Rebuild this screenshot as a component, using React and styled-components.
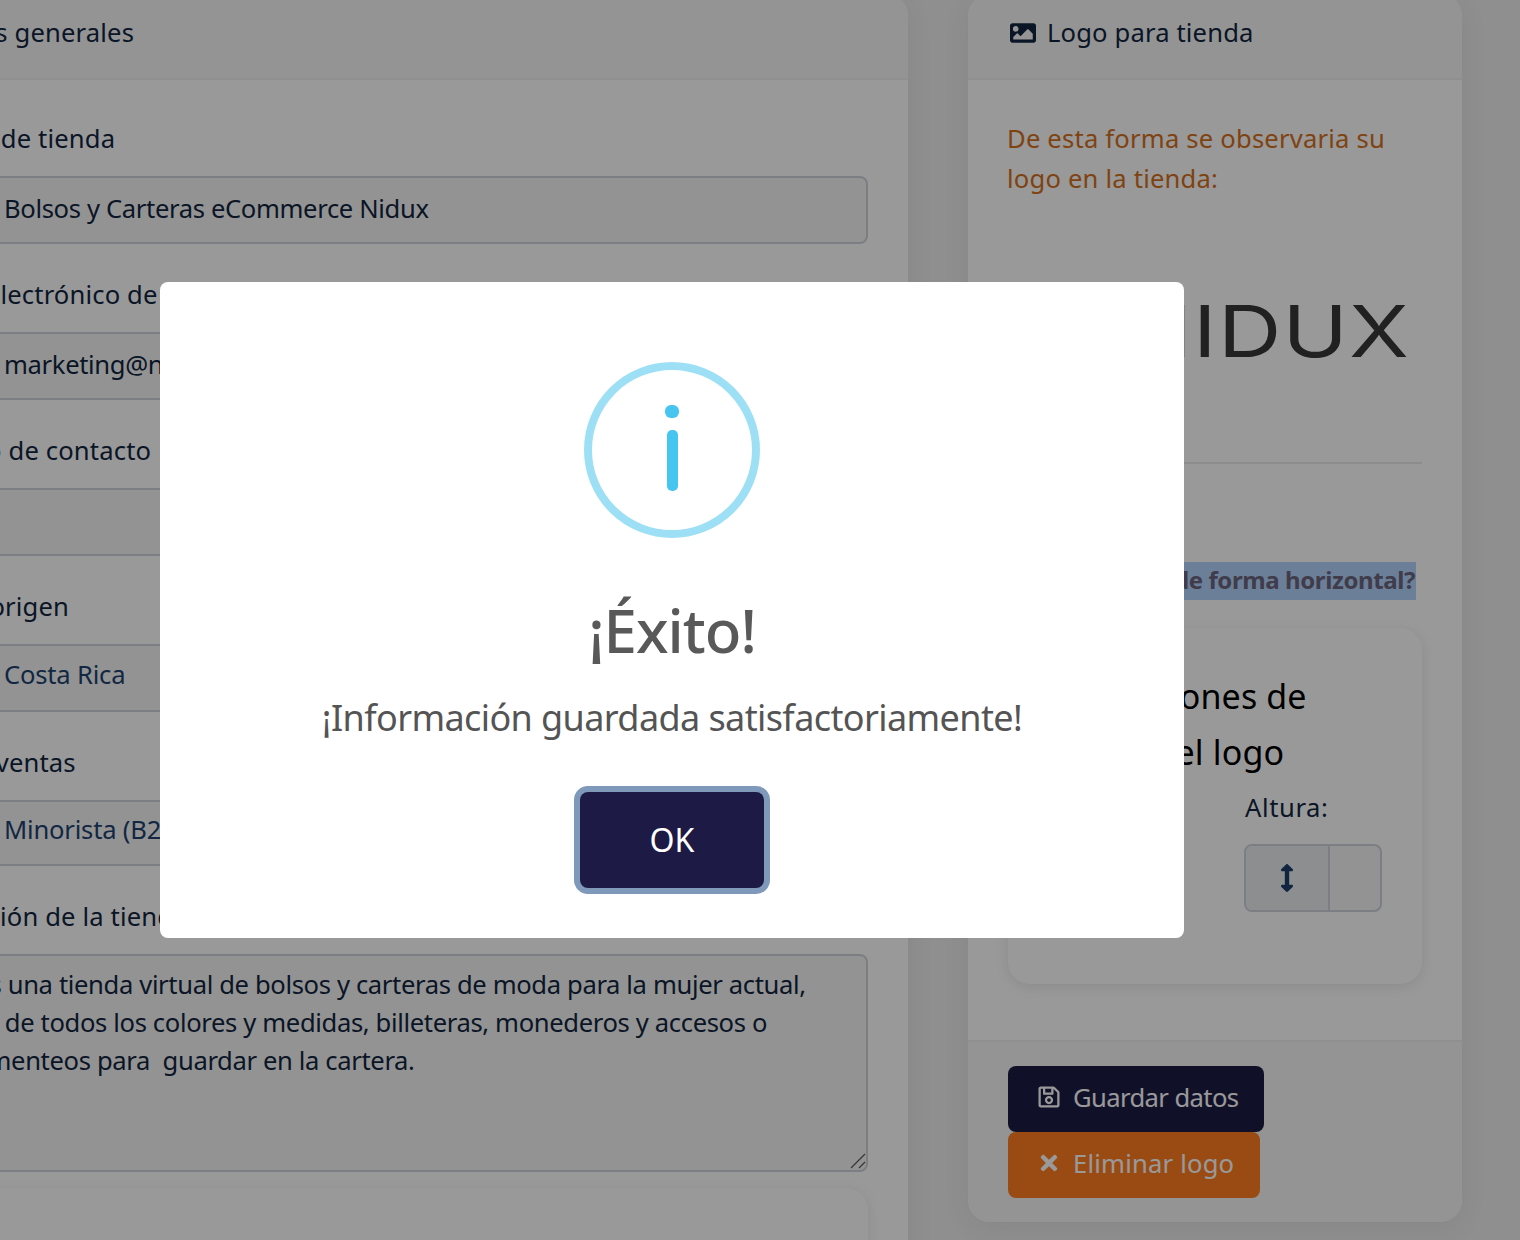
import React from 'react';
import styled, { createGlobalStyle } from 'styled-components';
import { FaImage, FaRegSave, FaTimes, FaArrowsAltV, FaStore, FaEnvelope, FaPhone, FaArrowsAltH } from 'react-icons/fa';

const Global = createGlobalStyle`
  * { box-sizing: border-box; }
  html, body { margin: 0; padding: 0; height: 100%; overflow: hidden; }
  body { background: #eeeeee; font-family: "Noto Sans", sans-serif; font-size: 25.6px; letter-spacing: 0.15px; color: #12263f; }
`;

const Viewport = styled.div`
  position: relative;
  width: 1520px;
  height: 1240px;
  overflow: hidden;
`;

// the page is scrolled sideways in the picture, so the left card starts off screen
const Page = styled.div`
  display: flex;
  align-items: flex-start;
  gap: 60px;
  width: 1650px;
  margin-left: -130px;
  margin-top: -6px;
`;

const Card = styled.section`
  width: ${p => p.$width}px;
  flex: none;
  background: #fff;
  border-radius: 22px;
  box-shadow: 0 6px 30px rgba(0, 0, 0, 0.06);
  overflow: hidden;
`;

const CardHeader = styled.header`
  display: flex;
  align-items: center;
  gap: 11px;
  height: 86px;
  padding: 0 42px 6px ${p => p.$left || 42}px;
  background: #f7f7f7;
  border-bottom: 2px solid #f0f0f0;
  line-height: 40px;
  color: #12263f;
`;

const CardBody = styled.div`
  padding: 40px 40px ${p => p.$bottom || 40}px;
`;

const CardFooter = styled.footer`
  display: flex;
  flex-direction: column;
  align-items: flex-start;
  padding: 24px 40px 24px;
  background: #f7f7f7;
  border-top: 2px solid #f0f0f0;
`;

const Field = styled.div`
  margin-bottom: ${p => p.$bottom ?? 32}px;
`;

const Label = styled.label`
  display: block;
  margin-bottom: 18px;
  margin-left: ${p => p.$shift || 0}px;
  line-height: 38px;
  height: 38px;
  white-space: nowrap;
`;

const Group = styled.div`
  display: flex;
  height: ${p => p.$height || 68}px;
  border: 2px solid #ced4da;
  border-radius: 8px;
  background: #f6f6f6;
  overflow: hidden;
`;

const Addon = styled.span`
  display: flex;
  align-items: center;
  justify-content: center;
  flex: none;
  width: ${p => p.$width}px;
  background: #ebedef;
  border-right: 2px solid #ced4da;
  color: #1d3d6b;
`;

const Input = styled.input`
  flex: 1;
  min-width: 0;
  padding: 0 18px 4px;
  border: 0;
  outline: 0;
  background: transparent;
  font: inherit;
  letter-spacing: -0.35px;
  color: #12263f;
`;

const Select = styled.select`
  flex: 1;
  min-width: 0;
  padding: 0 18px 7px;
  border: 0;
  outline: 0;
  background: transparent;
  appearance: none;
  font: inherit;
  letter-spacing: -0.2px;
  color: #1d4270;
`;

const TextareaWrap = styled.div`
  position: relative;
`;

const Textarea = styled.textarea`
  display: block;
  width: 100%;
  height: 218px;
  padding: 10px 20px 10px 10px;
  border: 2px solid #ced4da;
  border-radius: 8px;
  outline: 0;
  background: #f6f6f6;
  font: inherit;
  letter-spacing: -0.36px;
  line-height: 38px;
  color: #12263f;
  white-space: pre;
  overflow: hidden;
  resize: none;
`;

const Grip = styled.svg`
  position: absolute;
  right: 2px;
  bottom: 3px;
  width: 16px;
  height: 16px;
`;

const SubCard = styled.div`
  margin-top: ${p => p.$top || 0}px;
  min-height: ${p => p.$minHeight || 0}px;
  padding: 40px 40px 72px;
  background: #fff;
  border-radius: 22px;
  box-shadow: 0 3px 14px rgba(0, 0, 0, 0.09);
`;

const Notice = styled.p`
  margin: -1px 0 0 -1px;
  line-height: 40px;
  letter-spacing: 0.2px;
  color: #d4701e;
`;

const LogoBox = styled.div`
  display: flex;
  align-items: center;
  justify-content: flex-end;
  height: 263px;
  padding-right: 12px;
`;

const LogoText = styled.span`
  font-family: "Inter", sans-serif;
  font-size: 72px;
  font-weight: 400;
  line-height: 1;
  letter-spacing: 1px;
  color: #383838;
  transform: scaleX(1.22);
  transform-origin: right center;
`;

const Rule = styled.hr`
  margin: 0;
  border: 0;
  border-top: 2px solid #ececec;
`;

const Question = styled.div`
  margin-top: 98px;
  padding-right: 6px;
  text-align: right;
  height: 38px;
  white-space: nowrap;
`;

const Selected = styled.span`
  display: inline-block;
  height: 38px;
  padding-right: 1px;
  background: #b2d4ff;
  color: #6c647c;
  font-size: 24px;
  font-weight: 700;
  letter-spacing: -0.4px;
  line-height: 36px;
`;

const SubTitle = styled.h3`
  margin: 0 0 8px;
  font-size: 34px;
  font-weight: 400;
  letter-spacing: 0.15px;
  line-height: 56px;
  color: #000;
`;

const SizeGrid = styled.div`
  display: grid;
  grid-template-columns: 130px 138px;
  column-gap: 66px;
`;

const SizeLabel = styled.div`
  margin-bottom: 16px;
  margin-left: 1px;
  line-height: 40px;
  letter-spacing: 0.6px;
`;

const ActionButton = styled.button`
  display: flex;
  align-items: center;
  gap: 12px;
  width: ${p => p.$width}px;
  height: 66px;
  padding: 0 0 4px 29px;
  border: 0;
  border-radius: 8px;
  background: ${p => p.$bg};
  color: #fff;
  font: inherit;
  letter-spacing: ${p => p.$spacing}px;
`;

const Overlay = styled.div`
  position: absolute;
  inset: 0;
  padding: 282px 0 0 160px;
  background: rgba(0, 0, 0, 0.4);
`;

const Modal = styled.div`
  display: flex;
  flex-direction: column;
  align-items: center;
  width: 1024px;
  height: 656px;
  padding-top: 80px;
  background: #fff;
  border-radius: 8px;
`;

const InfoRing = styled.div`
  display: flex;
  flex-direction: column;
  align-items: center;
  width: 176px;
  height: 176px;
  padding-top: 35px;
  border: 8px solid #9de0f6;
  border-radius: 50%;
`;

const InfoDot = styled.span`
  width: 14px;
  height: 13px;
  border-radius: 6px;
  background: #45c5ef;
`;

const InfoBar = styled.span`
  width: 11px;
  height: 61px;
  margin-top: 12px;
  border-radius: 5px;
  background: #45c5ef;
`;

const ModalTitle = styled.h2`
  margin: 56px 0 0;
  font-size: 60px;
  font-weight: 500;
  letter-spacing: -1px;
  line-height: 72px;
  color: #595959;
`;

const ModalText = styled.p`
  margin: 27px 0 0;
  font-size: 36px;
  letter-spacing: -0.6px;
  line-height: 50px;
  color: #545454;
`;

const OkButton = styled.button`
  width: 184px;
  height: 96px;
  margin-top: 49px;
  padding: 0 0 2px;
  border: 0;
  border-radius: 8px;
  background: #1d1b45;
  box-shadow: 0 0 0 6px #7f99ba;
  color: #fff;
  font: inherit;
  font-size: 32px;
`;

const description = `Somos una tienda virtual de bolsos y carteras de moda para la mujer actual,
Bolsos de todos los colores y medidas, billeteras, monederos y accesos o
implementeos para  guardar en la cartera.`;

const App = () => {
  return (
    <Viewport>
      <Global />
      <Page>
        <Card $width={1038}>
          <CardHeader $left={32}>
            <FaStore size={24} />
            <span>Datos generales</span>
          </CardHeader>
          <CardBody $bottom={16}>
            <Field>
              <Label $shift={-16}>Nombre de tienda</Label>
              <Group>
                <Addon $width={74}><FaStore /></Addon>
                <Input readOnly value="Bolsos y Carteras eCommerce Nidux" />
              </Group>
            </Field>
            <Field>
              <Label $shift={-14}>Correo electrónico de contacto</Label>
              <Group>
                <Addon $width={74}><FaEnvelope /></Addon>
                <Input readOnly value="marketing@nidux.com" />
              </Group>
            </Field>
            <Field>
              <Label $shift={-13}>Teléfono de contacto</Label>
              <Group>
                <Addon $width={74}><FaPhone /></Addon>
                <Input readOnly value="" />
              </Group>
            </Field>
            <Field>
              <Label $shift={-14}>País de origen</Label>
              <Group>
                <Addon $width={74}><FaStore /></Addon>
                <Select defaultValue="cr"><option value="cr">Costa Rica</option></Select>
              </Group>
            </Field>
            <Field>
              <Label $shift={-11}>Tipo de ventas</Label>
              <Group $height={66}>
                <Addon $width={74}><FaStore /></Addon>
                <Select defaultValue="b2c"><option value="b2c">Minorista (B2C)</option></Select>
              </Group>
            </Field>
            <Field $bottom={16}>
              <Label $shift={-14}>Descripción de la tienda</Label>
              <TextareaWrap>
                <Textarea readOnly value={description} />
                <Grip viewBox="0 0 16 16" fill="none" stroke="#5c5c5c" strokeWidth="1.3">
                  <path d="M1 15L15 1" />
                  <path d="M9 15L15 9" />
                </Grip>
              </TextareaWrap>
            </Field>
            <SubCard $minHeight={200} />
          </CardBody>
        </Card>

        <Card $width={494}>
          <CardHeader>
            <FaImage size={26} />
            <span>Logo para tienda</span>
          </CardHeader>
          <CardBody $bottom={56}>
            <Notice>De esta forma se observaria su logo en la tienda:</Notice>
            <LogoBox>
              <LogoText>NIDUX</LogoText>
            </LogoBox>
            <Rule />
            <Question>
              <Selected>¿Ver logo de forma horizontal?</Selected>
            </Question>
            <SubCard $top={28}>
              <SubTitle>Dimensiones de ajuste del logo</SubTitle>
              <SizeGrid>
                <div>
                  <SizeLabel>Ancho:</SizeLabel>
                  <Group>
                    <Addon $width={84}><FaArrowsAltH /></Addon>
                  </Group>
                </div>
                <div>
                  <SizeLabel>Altura:</SizeLabel>
                  <Group>
                    <Addon $width={84}><FaArrowsAltV size={28} /></Addon>
                  </Group>
                </div>
              </SizeGrid>
            </SubCard>
          </CardBody>
          <CardFooter>
            <ActionButton $width={256} $bg="#1d1b45" $spacing={-0.6}>
              <FaRegSave size={24} />
              <span>Guardar datos</span>
            </ActionButton>
            <ActionButton $width={252} $bg="#ff7e21" $spacing={0.2}>
              <FaTimes size={24} />
              <span>Eliminar logo</span>
            </ActionButton>
          </CardFooter>
        </Card>
      </Page>

      <Overlay>
        <Modal>
          <InfoRing>
            <InfoDot />
            <InfoBar />
          </InfoRing>
          <ModalTitle>¡Éxito!</ModalTitle>
          <ModalText>¡Información guardada satisfactoriamente!</ModalText>
          <OkButton>OK</OkButton>
        </Modal>
      </Overlay>
    </Viewport>
  );
};

export default App;
